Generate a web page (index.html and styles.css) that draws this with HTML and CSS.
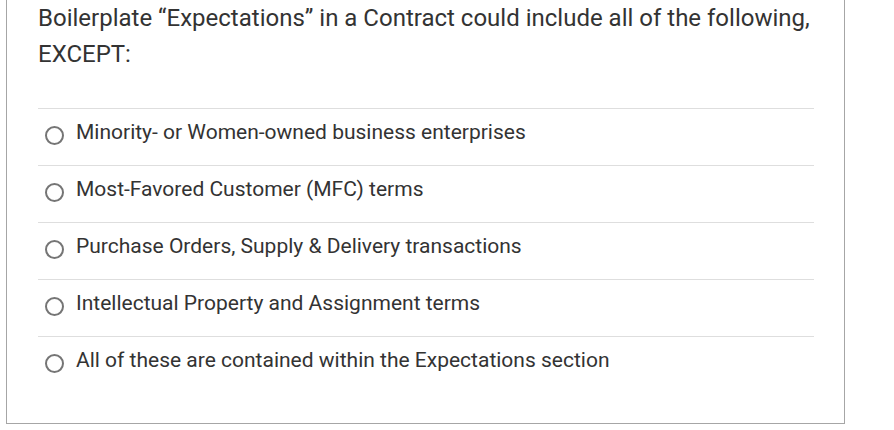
FILE: index.html
```html
<!DOCTYPE html>
<html>
<head>
<meta charset="utf-8">
<link rel="stylesheet" href="styles.css">
</head>
<body>
<div class="card">
  <div class="question">Boilerplate “Expectations” in a Contract could include all of the following, EXCEPT:</div>
  <ul class="options">
    <li class="option"><span class="radio"></span><span class="label">Minority- or Women-owned business enterprises</span></li>
    <li class="option"><span class="radio"></span><span class="label">Most-Favored Customer (MFC) terms</span></li>
    <li class="option"><span class="radio"></span><span class="label">Purchase Orders, Supply &amp; Delivery transactions</span></li>
    <li class="option"><span class="radio"></span><span class="label">Intellectual Property and Assignment terms</span></li>
    <li class="option"><span class="radio"></span><span class="label">All of these are contained within the Expectations section</span></li>
  </ul>
</div>
</body>
</html>
```
FILE: styles.css
```css
html, body {
  margin: 0;
  padding: 0;
  background: #ffffff;
}
body {
  font-family: Roboto, "Liberation Sans", Arial, sans-serif;
  color: #333333;
}
.card {
  margin-left: 6px;
  width: 776px;
  border: 1px solid #a6a6a6;
  border-top: none;
  padding: 0 30px 30px 31px;
}
.question {
  font-size: 24px;
  line-height: 36px;
  margin-bottom: 36px;
}
.options {
  list-style: none;
  margin: 0;
  padding: 0;
}
.option {
  box-sizing: border-box;
  display: flex;
  align-items: flex-start;
  height: 57px;
  padding-top: 11px;
  border-top: 1px solid #dedede;
  font-size: 21px;
  line-height: 24px;
}
.radio {
  box-sizing: border-box;
  width: 19px;
  height: 19px;
  margin-top: 6px;
  border: 2px solid #757575;
  border-radius: 50%;
  margin-left: 7px;
  margin-right: 12px;
  flex: none;
}
.label {
  white-space: nowrap;
}
```
